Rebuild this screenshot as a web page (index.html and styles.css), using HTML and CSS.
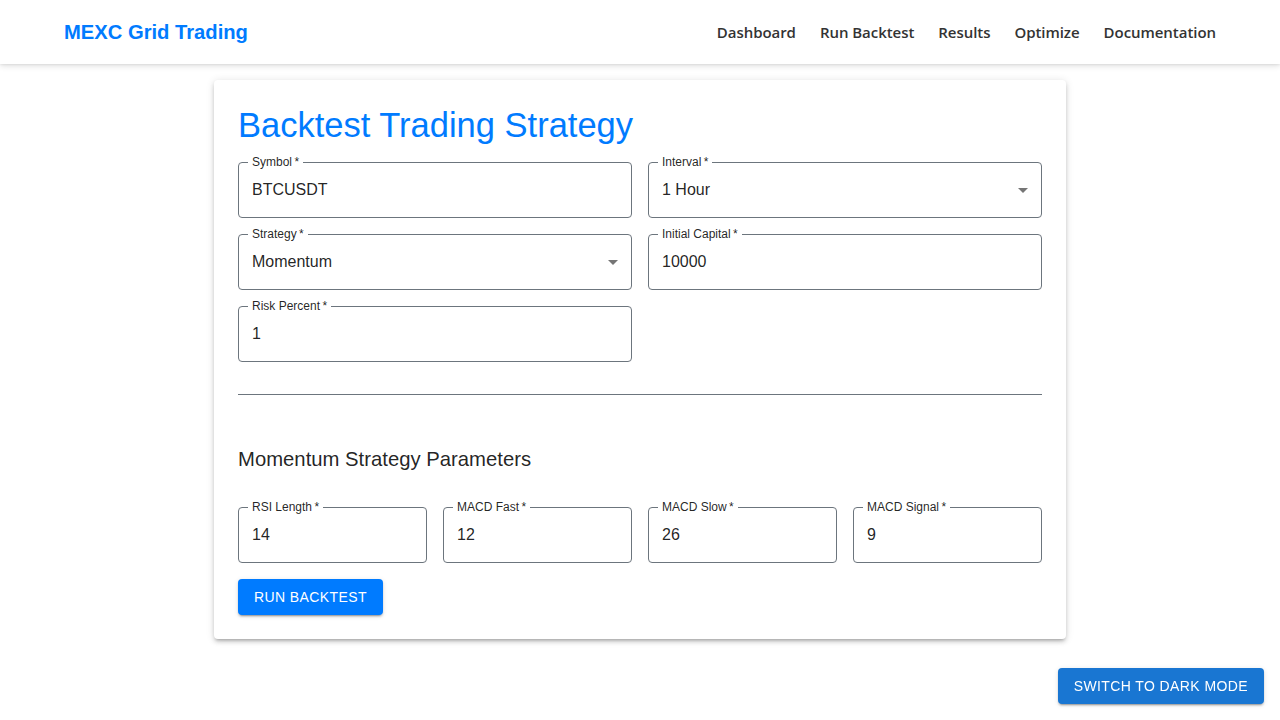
FILE: index.html
```html
<!DOCTYPE html>
<html lang="en">
<head>
<meta charset="utf-8">
<title>MEXC Grid Trading</title>
<link rel="stylesheet" href="styles.css">
</head>
<body>
<header class="appbar">
  <div class="brand">MEXC Grid Trading</div>
  <nav class="nav">
    <a href="#">Dashboard</a>
    <a href="#">Run Backtest</a>
    <a href="#">Results</a>
    <a href="#">Optimize</a>
    <a href="#">Documentation</a>
  </nav>
</header>

<main class="main">
  <section class="card">
    <h1 class="title">Backtest Trading Strategy</h1>

    <div class="grid2">
      <div class="field">
        <span class="label">Symbol&thinsp;*</span>
        <div class="value">BTCUSDT</div>
      </div>
      <div class="field">
        <span class="label">Interval&thinsp;*</span>
        <div class="value">1 Hour</div>
        <svg class="arrow" viewBox="0 0 24 24" width="24" height="24"><path d="M7 10l5 5 5-5z"/></svg>
      </div>
      <div class="field">
        <span class="label">Strategy&thinsp;*</span>
        <div class="value">Momentum</div>
        <svg class="arrow" viewBox="0 0 24 24" width="24" height="24"><path d="M7 10l5 5 5-5z"/></svg>
      </div>
      <div class="field">
        <span class="label">Initial Capital&thinsp;*</span>
        <div class="value">10000</div>
      </div>
      <div class="field">
        <span class="label">Risk Percent&thinsp;*</span>
        <div class="value">1</div>
      </div>
    </div>

    <hr class="divider">

    <h2 class="subtitle">Momentum Strategy Parameters</h2>

    <div class="grid4">
      <div class="field">
        <span class="label">RSI Length&thinsp;*</span>
        <div class="value">14</div>
      </div>
      <div class="field">
        <span class="label">MACD Fast&thinsp;*</span>
        <div class="value">12</div>
      </div>
      <div class="field">
        <span class="label">MACD Slow&thinsp;*</span>
        <div class="value">26</div>
      </div>
      <div class="field">
        <span class="label">MACD Signal&thinsp;*</span>
        <div class="value">9</div>
      </div>
    </div>

    <button class="btn-primary">Run Backtest</button>
  </section>
</main>

<button class="btn-theme">Switch to Dark Mode</button>
</body>
</html>
```

FILE: styles.css
```css
* { box-sizing: border-box; }

html, body {
  margin: 0;
  padding: 0;
  background: #ffffff;
  font-family: "Liberation Sans", Arial, sans-serif;
  color: rgba(0, 0, 0, 0.87);
}

.appbar {
  height: 64px;
  background: #ffffff;
  display: flex;
  align-items: center;
  justify-content: space-between;
  padding: 0 64px;
  box-shadow: 0 2px 6px rgba(0,0,0,0.12), 0 1px 2px rgba(0,0,0,0.06);
  position: relative;
  z-index: 2;
}

.brand {
  font-family: "Liberation Sans", Arial, sans-serif;
  font-weight: 700;
  font-size: 20.2px;
  color: #007bff;
}

.nav {
  display: flex;
  gap: 24px;
}

.nav a {
  font-family: "Open Sans", "Noto Sans", sans-serif;
  font-weight: 600;
  font-size: 15px;
  letter-spacing: -0.05px;
  color: #333333;
  text-decoration: none;
}

.main {
  display: flex;
  justify-content: center;
  padding: 16px 0 24px;
}

.card {
  width: 852px;
  background: #ffffff;
  border-radius: 4px;
  padding: 24px;
  box-shadow: 0 3px 3px -2px rgba(0,0,0,0.2), 0 3px 4px 0 rgba(0,0,0,0.14), 0 1px 8px 0 rgba(0,0,0,0.12);
}

.title {
  margin: 0 0 16px;
  font-weight: 400;
  font-size: 34.5px;
  line-height: 42px;
  color: #007bff;
}

.grid2 {
  display: grid;
  grid-template-columns: 1fr 1fr;
  gap: 16px;
}

.grid4 {
  display: grid;
  grid-template-columns: repeat(4, 1fr);
  gap: 16px;
}

.field {
  position: relative;
  height: 56px;
  border: 1px solid #6c757d;
  border-radius: 4px;
  display: flex;
  align-items: center;
  padding: 0 13px 2px;
}

.label {
  position: absolute;
  top: -8px;
  left: 9px;
  padding: 0 4px;
  background: #ffffff;
  font-size: 12px;
  line-height: 14px;
  color: rgba(0, 0, 0, 0.87);
  white-space: nowrap;
}

.value {
  font-size: 16px;
  line-height: 23px;
  color: rgba(0, 0, 0, 0.87);
}

.arrow {
  position: absolute;
  right: 6px;
  top: 15px;
  fill: #757575;
}

.divider {
  border: none;
  border-top: 1px solid #6c757d;
  margin: 32px 0 0;
  height: 0;
}

.subtitle {
  margin: 48px 0 32px;
  font-weight: 400;
  font-size: 20.3px;
  line-height: 32px;
  color: rgba(0, 0, 0, 0.87);
}

.btn-primary {
  margin-top: 16px;
  display: block;
  height: 36px;
  padding: 0 16px;
  border: none;
  border-radius: 4px;
  background: #007bff;
  color: #ffffff;
  font-family: "Liberation Sans", Arial, sans-serif;
  font-size: 14px;
  letter-spacing: 0.4px;
  text-transform: uppercase;
  box-shadow: 0 3px 1px -2px rgba(0,0,0,0.2), 0 2px 2px 0 rgba(0,0,0,0.14), 0 1px 5px 0 rgba(0,0,0,0.12);
}

.btn-theme {
  position: fixed;
  right: 16px;
  bottom: 16px;
  height: 36px;
  padding: 0 16px;
  border: none;
  border-radius: 4px;
  background: #1976d2;
  color: #ffffff;
  font-family: "Liberation Sans", Arial, sans-serif;
  font-size: 14px;
  letter-spacing: 0.4px;
  text-transform: uppercase;
  box-shadow: 0 3px 1px -2px rgba(0,0,0,0.2), 0 2px 2px 0 rgba(0,0,0,0.14), 0 1px 5px 0 rgba(0,0,0,0.12);
}
```
